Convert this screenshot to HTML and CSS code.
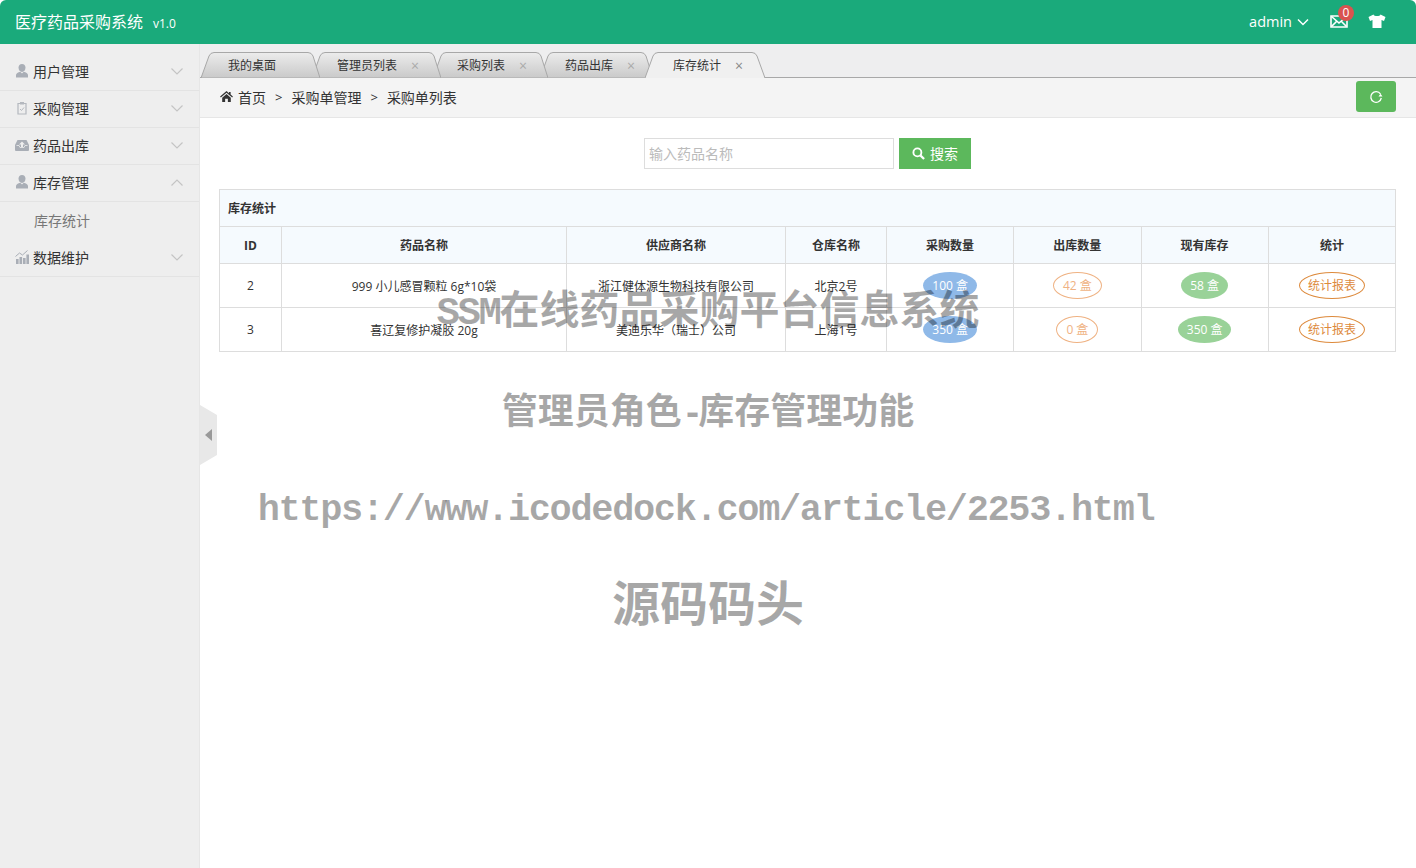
FILE: index.html
```html
<!DOCTYPE html>
<html lang="zh-CN">
<head>
  <meta charset="UTF-8">
  <title>医疗药品采购系统</title>
  <link rel="stylesheet" href="styles.css">
</head>
<body>

  <header class="topbar">
    <div class="brand">医疗药品采购系统<span class="version">v1.0</span></div>
    <div class="topbar-right">
      <span class="user">admin
        <svg class="user-caret" viewBox="0 0 12 8" width="12" height="8"><path d="M1 1.5l5 5 5-5" fill="none" stroke="#fff" stroke-width="1.5"/></svg>
      </span>
      <span class="mail">
        <svg viewBox="0 0 18 13" width="18" height="13"><path d="M1 1h16v11H1z" fill="none" stroke="#fff" stroke-width="1.6"/><path d="M1.500 1.500L9 8l7.500-6.500M1.500 11.500l5-5M16.500 11.500l-5-5" fill="none" stroke="#fff" stroke-width="1.600"/></svg>
        <span class="badge">0</span>
      </span>
      <svg class="shirt" viewBox="0 0 18 14" width="18" height="14"><path d="M5.500 0.500L0.500 3l1.500 4 2.500-1v8h9V6l2.500 1 1.500-4-5-2.500C12 2.500 6 2.500 5.500 0.500z" fill="#fff"/></svg>
    </div>
  </header>

  <div class="layout">
    <aside class="sidebar">
      <div class="nav-item">
        <svg class="nav-icon" viewBox="0 0 14 14" width="14" height="14"><path d="M7 0c2.200 0 3.500 1.600 3.500 3.800S9 8 7 8 3.500 6 3.500 3.800 4.800 0 7 0z" fill="#a9aeb6"/><path d="M1 13.500V11c0-1.500 2-2.500 4.300-3.200L7 9.500l1.700-1.700C11 8.500 13 9.500 13 11v2.500z" fill="#a9aeb6"/></svg>
        <span class="nav-label">用户管理</span>
        <svg class="nav-caret" viewBox="0 0 12 7" width="12" height="7"><path d="M.5.500L6 6 11.500.500" fill="none" stroke="#c4c4c4" stroke-width="1.200"/></svg>
      </div>
      <div class="nav-item">
        <svg class="nav-icon" viewBox="0 0 14 14" width="14" height="14"><path d="M3 2.500h8v10.500H3z" fill="none" stroke="#b4b8be" stroke-width="1.200"/><path d="M5 1h4v2.500H5z" fill="#b4b8be"/><path d="M5 8l1.500 1.500L9 6.500" fill="none" stroke="#b4b8be"/></svg>
        <span class="nav-label">采购管理</span>
        <svg class="nav-caret" viewBox="0 0 12 7" width="12" height="7"><path d="M.5.500L6 6 11.500.500" fill="none" stroke="#c4c4c4" stroke-width="1.200"/></svg>
      </div>
      <div class="nav-item">
        <svg class="nav-icon nav-icon-wide" viewBox="0 0 14 11" width="14" height="11"><path d="M2.500 0h9L14 5v5a1 1 0 0 1-1 1H1a1 1 0 0 1-1-1V5z" fill="#a9aeb6"/><path d="M7 1.500L4 4.500h2V7h2V4.500h2z" fill="#eee"/><path d="M1.500 5.500H4L5 7.500h4l1-2h2.500" fill="none" stroke="#eee" stroke-width=".8"/></svg>
        <span class="nav-label">药品出库</span>
        <svg class="nav-caret" viewBox="0 0 12 7" width="12" height="7"><path d="M.5.500L6 6 11.500.500" fill="none" stroke="#c4c4c4" stroke-width="1.200"/></svg>
      </div>
      <div class="nav-item">
        <svg class="nav-icon" viewBox="0 0 14 14" width="14" height="14"><path d="M7 0c2.200 0 3.500 1.600 3.500 3.800S9 8 7 8 3.500 6 3.500 3.800 4.800 0 7 0z" fill="#a9aeb6"/><path d="M1 13.500V11c0-1.500 2-2.500 4.300-3.200L7 9.500l1.700-1.700C11 8.500 13 9.500 13 11v2.500z" fill="#a9aeb6"/></svg>
        <span class="nav-label">库存管理</span>
        <svg class="nav-caret" viewBox="0 0 12 7" width="12" height="7"><path d="M.5 6.500L6 1l5.500 5.500" fill="none" stroke="#c4c4c4" stroke-width="1.200"/></svg>
      </div>
      <div class="nav-sub">库存统计</div>
      <div class="nav-item">
        <svg class="nav-icon" viewBox="0 0 14 14" width="14" height="14"><path d="M1 9h2.600v5H1zM4.500 7h2.600v7H4.500zM8 8h2.600v6H8zM11.400 4.500H14V14h-2.600z" fill="#a9aeb6"/><path d="M.5 6.500L4.500 3l3 2 5-4.500" fill="none" stroke="#a9aeb6"/></svg>
        <span class="nav-label">数据维护</span>
        <svg class="nav-caret" viewBox="0 0 12 7" width="12" height="7"><path d="M.5.500L6 6 11.500.500" fill="none" stroke="#c4c4c4" stroke-width="1.200"/></svg>
      </div>
    </aside>

    <main class="content">
      <div class="tabs">
        <svg class="tab-defs" width="0" height="0">
          <defs>
            <linearGradient id="tabGrad" x1="0" y1="0" x2="0" y2="1">
              <stop offset="0" stop-color="#ececec"/>
              <stop offset="1" stop-color="#c9c9c9"/>
            </linearGradient>
          </defs>
        </svg>
        <div class="tab tab-1">
          <svg class="tab-bg" viewBox="0 0 119 26"><path d="M0 26L8 4Q9.500 .5 13 .5H107Q110.500 .5 112 4L119 26z"/></svg>
          <span>我的桌面</span>
        </div>
        <div class="tab tab-2">
          <svg class="tab-bg" viewBox="0 0 129 26"><path d="M0 26L8 4Q9.500 .5 13 .5H117Q120.500 .5 122 4L129 26z"/></svg>
          <span>管理员列表</span><i class="tab-close">×</i>
        </div>
        <div class="tab tab-3">
          <svg class="tab-bg" viewBox="0 0 115 26"><path d="M0 26L8 4Q9.500 .5 13 .5H103Q106.500 .5 108 4L115 26z"/></svg>
          <span>采购列表</span><i class="tab-close">×</i>
        </div>
        <div class="tab tab-4">
          <svg class="tab-bg" viewBox="0 0 113 26"><path d="M0 26L8 4Q9.500 .5 13 .5H101Q104.500 .5 106 4L113 26z"/></svg>
          <span>药品出库</span><i class="tab-close">×</i>
        </div>
        <div class="tab tab-5 active">
          <svg class="tab-bg" viewBox="0 0 120 26"><path d="M0 26L8 4Q9.500 .5 13 .5H107Q110.500 .5 112 4L120 26"/></svg>
          <span>库存统计</span><i class="tab-close">×</i>
        </div>
      </div>

      <div class="crumbs">
        <svg class="home" viewBox="0 0 14 12" width="13" height="11"><path d="M7 0L0 6l.8 1L7 1.800 13.200 7l.8-1-2.500-2.100V1h-1.800v1.400z" fill="#333"/><path d="M2.300 7.300L7 3.300l4.700 4V12H8.500V8.500h-3V12H2.300z" fill="#333"/></svg>
        <span>首页</span><b class="sep">&gt;</b><span>采购单管理</span><b class="sep">&gt;</b><span>采购单列表</span>
        <button class="refresh">
          <svg viewBox="0 0 14 14" width="14" height="14"><path d="M11.500 4A5.300 5.300 0 1 0 12.300 8" fill="none" stroke="#fff" stroke-width="1.300"/><path d="M13.500 6.500h-4L11.500 3.800z" fill="#fff"/></svg>
        </button>
      </div>

      <div class="page">
        <div class="search">
          <input class="search-input" type="text" placeholder="输入药品名称">
          <button class="search-btn">
            <svg viewBox="0 0 14 14" width="13" height="13"><circle cx="5.800" cy="5.800" r="4.300" fill="none" stroke="#fff" stroke-width="2"/><path d="M9 9l4 4" stroke="#fff" stroke-width="2.400"/></svg>
            <span>搜索</span>
          </button>
        </div>

        <table class="stock">
          <colgroup>
            <col class="c-id"><col class="c-name"><col class="c-supplier"><col class="c-store">
            <col class="c-num"><col class="c-num"><col class="c-num"><col class="c-num">
          </colgroup>
          <thead>
            <tr><th class="caption" colspan="8">库存统计</th></tr>
            <tr>
              <th>ID</th><th>药品名称</th><th>供应商名称</th><th>仓库名称</th>
              <th>采购数量</th><th>出库数量</th><th>现有库存</th><th>统计</th>
            </tr>
          </thead>
          <tbody>
            <tr>
              <td>2</td><td>999 小儿感冒颗粒 6g*10袋</td><td>浙江健体源生物科技有限公司</td><td>北京2号</td>
              <td><span class="pill pill-blue">100 盒</span></td>
              <td><span class="pill pill-line">42 盒</span></td>
              <td><span class="pill pill-green">58 盒</span></td>
              <td><span class="pill pill-report">统计报表</span></td>
            </tr>
            <tr>
              <td>3</td><td>喜辽复修护凝胶 20g</td><td>美迪乐华（瑞士）公司</td><td>上海1号</td>
              <td><span class="pill pill-blue">350 盒</span></td>
              <td><span class="pill pill-line">0 盒</span></td>
              <td><span class="pill pill-green">350 盒</span></td>
              <td><span class="pill pill-report">统计报表</span></td>
            </tr>
          </tbody>
        </table>
      </div>
    </main>
  </div>

  <div class="collapse-handle"><span class="collapse-arrow"></span></div>

  <div class="watermark">
    <div class="wm-title"><span class="wm-latin">SSM</span>在线药品采购平台信息系统</div>
    <div class="wm-role">管理员角色<span class="wm-dash">-</span>库存管理功能</div>
    <div class="wm-url">https://www.icodedock.com/article/2253.html</div>
    <div class="wm-name">源码码头</div>
  </div>

</body>
</html>
```

FILE: styles.css
```css
* {
  box-sizing: border-box;
}

html, body {
  height: 100%;
}

body {
  margin: 0;
  background: #fff;
  color: #333;
  font-family: "Open Sans", "Noto Sans CJK SC", sans-serif;
  font-size: 12px;
  overflow: hidden;
}

/* top bar */
.topbar {
  height: 44px;
  background: #1aaa7b;
  border-radius: 6px 6px 0 0;
  color: #fff;
  display: flex;
  align-items: center;
  justify-content: space-between;
  padding: 0 30px 2px 15px;
}

.brand {
  font-size: 16px;
}

.version {
  font-size: 12px;
  margin-left: 10px;
}

.topbar-right {
  display: flex;
  align-items: center;
}

.user {
  font-size: 14.500px;
  display: flex;
  align-items: center;
}

.user-caret {
  margin-left: 5px;
  margin-top: 1px;
}

.mail {
  position: relative;
  display: flex;
  margin-left: 21px;
}

.badge {
  position: absolute;
  top: -10px;
  left: 8px;
  width: 16px;
  height: 16px;
  border-radius: 50%;
  background: #d9534f;
  font-size: 12px;
  line-height: 16px;
  text-align: center;
}

.shirt {
  margin-left: 20px;
}

/* sidebar */
.layout {
  display: flex;
  height: 824px;
}

.sidebar {
  width: 200px;
  flex: none;
  background: #eeeeee;
  border-right: 1px solid #e6e6e6;
  padding-top: 10px;
}

.nav-item {
  height: 37px;
  display: flex;
  align-items: center;
  padding: 0 16px 2px 15px;
  border-bottom: 1px solid #e3e3e3;
  font-size: 14px;
}

.nav-icon {
  flex: none;
}

.nav-label {
  margin-left: 4px;
  flex: 1;
}

.nav-sub {
  height: 38px;
  line-height: 38px;
  padding-left: 34px;
  font-size: 14px;
  color: #777;
}

/* tabs */
.content {
  flex: 1;
  min-width: 0;
}

.tabs {
  height: 34px;
  background: #eeeeef;
  border-bottom: 1px solid #a8a8a8;
  display: flex;
  align-items: flex-end;
  padding-left: 1px;
}

.tab-defs {
  position: absolute;
}

.tab {
  position: relative;
  height: 26px;
  margin-right: -8px;
  margin-bottom: -1px;
  display: flex;
  align-items: center;
  flex: none;
  color: #333;
}

.tab > span {
  position: relative;
}

.tab-bg {
  position: absolute;
  left: 0;
  top: 0;
  width: 100%;
  height: 100%;
}

.tab-bg path {
  fill: url(#tabGrad);
  stroke: #a8a8a8;
  stroke-width: 1;
}

.tab.active .tab-bg path {
  fill: #f0f0f0;
}

.tab-close {
  position: relative;
  margin-left: 14px;
  font-style: normal;
  font-size: 14px;
  color: #aaa;
}

.tab.active .tab-close {
  color: #888;
}

.tab-1 { width: 119px; padding-left: 27px; z-index: 4; }
.tab-2 { width: 129px; padding-left: 25px; z-index: 3; }
.tab-3 { width: 115px; padding-left: 24px; z-index: 2; }
.tab-4 { width: 113px; padding-left: 25px; z-index: 1; }
.tab-5 { width: 120px; padding-left: 28px; z-index: 5; }

/* breadcrumb */
.crumbs {
  height: 40px;
  background: #f4f4f4;
  border-bottom: 1px solid #e6e6e6;
  display: flex;
  align-items: center;
  padding: 0 20px 2px;
  font-size: 14px;
}

.home {
  margin-right: 5px;
}

.sep {
  font-weight: normal;
  font-size: 13px;
  margin: 0 9px;
}

.refresh {
  margin-left: auto;
  width: 40px;
  height: 31px;
  border: 0;
  border-radius: 3px;
  background: #5cb85c;
  display: flex;
  align-items: center;
  justify-content: center;
  padding: 0;
}

/* search */
.page {
  padding: 20px 20px 0 19px;
}

.search {
  display: flex;
  justify-content: center;
  gap: 5px;
}

.search-input {
  width: 250px;
  height: 31px;
  border: 1px solid #ddd;
  padding: 0 4px;
  font-family: inherit;
  font-size: 14px;
  outline: 0;
}

.search-input::placeholder {
  color: #bbb;
}

.search-btn {
  width: 72px;
  height: 31px;
  border: 0;
  background: #5cb85c;
  color: #fff;
  font-family: inherit;
  font-size: 14px;
  display: flex;
  align-items: center;
  justify-content: center;
  gap: 5px;
  padding: 0 0 1px;
}

/* table */
.stock {
  width: 1176px;
  margin-top: 20px;
  border-collapse: collapse;
  table-layout: fixed;
}

.c-id { width: 62px; }
.c-name { width: 285px; }
.c-supplier { width: 219px; }
.c-store { width: 101px; }
.c-num { width: 127.250px; }

.stock th, .stock td {
  border: 1px solid #ddd;
  text-align: center;
  font-size: 12px;
  padding: 0;
}

.stock th {
  height: 37px;
  background: #f5fafe;
  font-weight: bold;
}

.stock th.caption {
  text-align: left;
  padding-left: 8px;
}

.stock td {
  height: 44px;
}

.pill {
  display: inline-block;
  height: 27px;
  line-height: 25px;
  padding: 0 8px;
  border-radius: 50%;
  border: 1px solid transparent;
  vertical-align: middle;
}

.pill-blue {
  background: #8fb9e8;
  color: #fff;
}

.pill-green {
  background: #99d298;
  color: #fff;
}

.pill-line {
  padding: 0 9px;
  border-color: #efb283;
  color: #efb283;
}

.pill-report {
  border-color: #dd8a3c;
  color: #dd8a3c;
}

/* sidebar toggle */
.collapse-handle {
  position: absolute;
  left: 200px;
  top: 405px;
  width: 17px;
  height: 60px;
  background: #e8e8e8;
  clip-path: polygon(0 0, 100% 10px, 100% 50px, 0 100%);
}

.collapse-arrow {
  position: absolute;
  left: 5px;
  top: 24px;
  border-style: solid;
  border-width: 6px 7px 6px 0;
  border-color: transparent #999 transparent transparent;
}

/* watermark text laid over the page */
.watermark {
  position: absolute;
  left: 0;
  right: 0;
  top: 289px;
  display: flex;
  flex-direction: column;
  align-items: center;
  color: rgba(0, 0, 0, 0.34);
  font-weight: bold;
  font-family: "Liberation Mono", "Noto Sans CJK SC", monospace;
  pointer-events: none;
  white-space: nowrap;
}

.wm-title {
  font-size: 40px;
  line-height: 50px;
}

.wm-latin {
  font-size: 39px;
  letter-spacing: -2.400px;
}

.wm-role {
  font-size: 36px;
  line-height: 50px;
  margin-top: 51px;
}

.wm-dash {
  letter-spacing: -5px;
}

.wm-url {
  font-size: 37px;
  letter-spacing: -1.350px;
  line-height: 50px;
  margin-top: 45px;
  margin-right: 4px;
}

.wm-name {
  font-size: 48px;
  line-height: 60px;
  margin-top: 43px;
}
```
